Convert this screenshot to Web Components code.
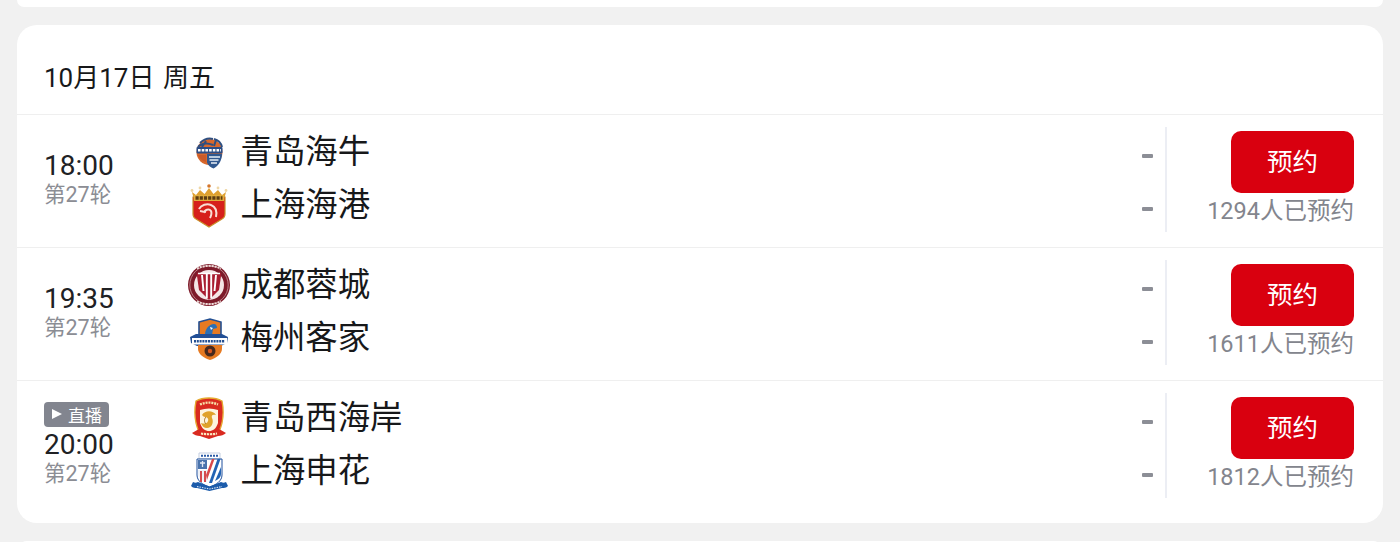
<!DOCTYPE html>
<html lang="zh">
<head>
<meta charset="utf-8">
<style>
  html, body { margin: 0; height: 542px; overflow: hidden; background: #f1f1f1; }
  body { font-family: Roboto, "Noto Sans CJK SC", sans-serif; color: #17181a; }
  schedule-page { display: flex; flex-direction: column; gap: 18px; padding: 0 17px; }
</style>
</head>
<body>
<schedule-page>
  <day-card class="edge-top"></day-card>
  <day-card date="10月17日 周五">
    <match-row time="18:00" round="第27轮" home="青岛海牛" away="上海海港" home-logo="hainiu" away-logo="haigang" count="1294"></match-row>
    <match-row time="19:35" round="第27轮" home="成都蓉城" away="梅州客家" home-logo="rongcheng" away-logo="kejia" count="1611"></match-row>
    <match-row time="20:00" round="第27轮" home="青岛西海岸" away="上海申花" home-logo="xihaian" away-logo="shenhua" count="1812" live></match-row>
  </day-card>
  <day-card class="edge-bottom"></day-card>
</schedule-page>

<script>
// club crests, drawn on a 40x44 box
const LOGOS = {
  hainiu: `
    <circle cx="20.500" cy="22" r="13" fill="#d8682c"/>
    <path d="M11 13c4-4 9-5 13-4M25 9c4 1 7 4 8 8M9 17c5-5 10-4 15-2M17 11l-4 6M27 10l-2 6" stroke="#2f4f80" stroke-width="2" fill="none"/>
    <rect x="7.500" y="17" width="26" height="6.500" rx="1" fill="#2a4d86"/>
    <path d="M9 20.300h23" stroke="#fff" stroke-width="2.400" stroke-dasharray="2.600 1.100"/>
    <path d="M18 24h15c0 7-4 12-8.500 14.500-3-1-5.500-3-6.500-6z" fill="#31588f"/>
    <path d="M20 27h11M20.500 30h9M22 33h6" stroke="#e9eef6" stroke-width="1.300"/>
    <path d="M9 25h8v7c-4-1-7-4-8-7z" fill="#c95a2a"/>`,
  haigang: `
    <path d="M3 9l4 3 4-5 4.500 4L20 5l4.500 6L29 7l4 5 4-3-2 8H5z" fill="#dfa030"/>
    <circle cx="3" cy="7.500" r="1.400" fill="#efd7a6"/><circle cx="11" cy="5" r="1.400" fill="#efd7a6"/>
    <circle cx="20" cy="3" r="1.800" fill="#d4762c"/><circle cx="29" cy="5" r="1.400" fill="#efd7a6"/><circle cx="37" cy="7.500" r="1.400" fill="#efd7a6"/>
    <path d="M4 14h32v17c0 2-1 4-3 5l-13 8-13-8c-2-1-3-3-3-5z" fill="#d6201b" stroke="#c98f2a" stroke-width="1.200"/>
    <rect x="5" y="12" width="30" height="6" fill="#e2ae3c"/>
    <path d="M6.500 15h27" stroke="#5d3c12" stroke-width="3.400" stroke-dasharray="3.200 1"/>
    <path d="M10 26c2-4 8-6 12-4 5 2 6 7 5 12M16 30c-1-3 4-5 6-2 1 2 0 5-1 7M11 28l5 1" stroke="#f9ddd5" stroke-width="2" fill="none"/>`,
  rongcheng: `
    <circle cx="20" cy="22" r="21" fill="#7e1b2a"/>
    <circle cx="20" cy="22" r="19.200" fill="none" stroke="#c99da0" stroke-width=".8"/>
    <circle cx="20" cy="22" r="15" fill="#f4e6e6"/>
    <path d="M8 10h24v3l-2 14-10 10-10-10-2-14z" fill="#a81d30"/>
    <path d="M13 12l1.500 16M17.800 11v24M22.200 11v24M27 12l-1.500 16" stroke="#fff" stroke-width="1.900"/>
    <path d="M9 10.500h22" stroke="#fff" stroke-width="1.500"/>
    <path d="M8 5.500c7-3.500 17-3.500 24 0" stroke="#eeddda" stroke-width="2" stroke-dasharray="2 1" fill="none"/>
    <path d="M8 38.500c7 3.500 17 3.500 24 0" stroke="#eeddda" stroke-width="2" stroke-dasharray="2 1" fill="none"/>`,
  kejia: `
    <path d="M10 6l11-3 11 3v18H10z" fill="#e67a22" stroke="#234f92" stroke-width="1.600"/>
    <path d="M16 19c0-6 4-11 9-11 2 0 3 2 3 4l-4 1-1 6z" fill="#2a6fb5"/>
    <path d="M21 11l3 1-2 2z" fill="#fff"/>
    <path d="M1 21l6-3 26 0 6 3-1 6-6 3H8l-6-3z" fill="#214f96"/>
    <rect x="3" y="22" width="35" height="6.500" fill="#fff"/>
    <path d="M5 25.300h31" stroke="#234f92" stroke-width="2.400" stroke-dasharray="2 .8"/>
    <path d="M9 29h24v4c0 5-6 9-12 11-6-2-12-6-12-11z" fill="#e67a22"/>
    <circle cx="21" cy="35" r="5.500" fill="#47291d"/>
    <circle cx="21" cy="35" r="2.200" fill="#d9561f"/>`,
  xihaian: `
    <path d="M7 5c7-4 19-4 26 0 2 10 1 22-3 31H10C6 27 5 15 7 5z" fill="#d92a20" stroke="#e6a92f" stroke-width="1.300"/>
    <path d="M11 14c6-2 12-2 18 0v13c-2 6-5 8-9 8s-7-2-9-8z" fill="#fdf4de"/>
    <path d="M13 19c3-5 11-5 14 0-3-1-5 0-4 3 2 4 0 10-5 10-3 0-5-2-6-5 3 1 6 1 7-2 1-2-1-4-3-4-1 0-2-1-3-2z" fill="#e0a22a"/>
    <path d="M17 21c-2 2-2 5 0 7" stroke="#a8701c" stroke-width="1" fill="none"/>
    <path d="M11 8.500c6-2.500 12-2.500 18 0" stroke="#f6dfa8" stroke-width="2.400" stroke-dasharray="2 .9" fill="none"/>
    <path d="M3 37l7-4c7 3 13 3 20 0l7 4c-2 2-5 3-8 3l-9 3-9-3c-3 0-6-1-8-3z" fill="#d92a20"/>
    <path d="M12 37.500c5 1 11 1 16 0" stroke="#fbe9c0" stroke-width="2.200" stroke-dasharray="2.200 .8" fill="none"/>`,
  shenhua: `
    <path d="M10 4h21v6H10z" fill="#fff" stroke="#c3cde0" stroke-width="1"/>
    <path d="M12 6.800h17" stroke="#2a5aa6" stroke-width="2" stroke-dasharray="2 1"/>
    <path d="M8 10h25v16c0 6-6 10-12.500 12C14 36 8 32 8 26z" fill="#fff" stroke="#1c4e9d" stroke-width="1"/>
    <rect x="9" y="11" width="9" height="9" fill="#4a74ad"/>
    <path d="M11 14h5M13.500 12v6" stroke="#e3e9f3" stroke-width="1.300"/>
    <path d="M9 21h9v12c-4-1-9-4-9-8z" fill="#eef1f7"/>
    <path d="M11 22h2v11h-2zM15 22h2v11h-2z" fill="#d44a4e"/>
    <path d="M20 34l8.500-24h3L23 34z" fill="#2263b4"/>
    <path d="M17 26l6-16h2.500l-7.500 21z" fill="#d8484a"/>
    <path d="M26 32l6-14v7c0 3-2 5-6 7z" fill="#2263b4"/>
    <path d="M4 33c2 1 3 1 5 0l11.500 4.500L32 33c2 1 3 1 5 0l2 4c-2 2-4 2-6 2l-12.500 3-12.500-3c-2 0-4 0-6-2z" fill="#1c5cab"/>
    <path d="M8 37.500l12.500 2.500 12.500-2.500" stroke="#d8e2f2" stroke-width="1.200" stroke-dasharray="1.500 1" fill="none"/>`
};

class TeamLine extends HTMLElement {
  constructor() {
    super();
    this.attachShadow({ mode: "open" });
  }

  connectedCallback() {
    const logo = LOGOS[this.getAttribute("logo")] || "";
    this.shadowRoot.innerHTML = `
      <style>
        :host { display: flex; align-items: center; height: 53px; }
        svg { width: 40px; height: 44px; display: block; margin-right: 11.500px; overflow: visible; filter: blur(.35px); flex: none; }
        .name { flex: 1; font-size: 32.400px; line-height: 44px; white-space: nowrap; }
        .score { width: 11px; height: 4px; background: #8c8e96; border-radius: 1px; margin: 8px 12px 0 0; }
      </style>
      <svg viewBox="0 0 40 44">${logo}</svg>
      <span class="name">${this.getAttribute("name")}</span>
      <span class="score"></span>
    `;
  }
}

class LiveTag extends HTMLElement {
  constructor() {
    super();
    this.attachShadow({ mode: "open" });
    this.shadowRoot.innerHTML = `
      <style>
        :host { display: inline-flex; align-items: center; gap: 6px; height: 25px; width: 65px; margin: -1px 0 1px; box-sizing: border-box; padding-left: 8px; background: #82858f; border-radius: 4px; color: #fff; font-size: 17px; }
        i { width: 0; height: 0; border-left: 10px solid #fff; border-top: 5.500px solid transparent; border-bottom: 5.500px solid transparent; }
      </style>
      <i></i><slot></slot>
    `;
  }
}

class MatchRow extends HTMLElement {
  constructor() {
    super();
    this.attachShadow({ mode: "open" });
  }

  connectedCallback() {
    const live = this.hasAttribute("live");
    this.shadowRoot.innerHTML = `
      <style>
        :host { display: grid; grid-template-columns: 172px 976px 1fr; align-items: center; height: 132px; border-top: 1px solid #efefef; }
        .when { padding-left: 27px; margin-top: -6px; display: flex; flex-direction: column; align-items: flex-start; }
        .time { font-size: 28px; line-height: 33px; color: #202124; }
        .round { font-size: 21.500px; line-height: 25px; color: #8b8d94; }
        .teams { display: flex; flex-direction: column; margin-top: -5px; }
        .action { align-self: start; height: 105px; margin-top: 12px; border-left: 2px solid #eceef4; display: flex; flex-direction: column; align-items: flex-end; padding-right: 29px; box-sizing: border-box; }
        button { width: 123px; height: 62px; margin-top: 4px; border: 0; border-radius: 10px; background: #d9000f; color: #fff; font: inherit; font-size: 25.500px; padding: 0 0 6px; }
        .count { font-size: 23.500px; line-height: 37px; color: #83858d; white-space: nowrap; }
      </style>
      <div class="when">
        ${live ? "<live-tag>直播</live-tag>" : ""}
        <span class="time">${this.getAttribute("time")}</span>
        <span class="round">${this.getAttribute("round")}</span>
      </div>
      <div class="teams">
        <team-line name="${this.getAttribute("home")}" logo="${this.getAttribute("home-logo")}"></team-line>
        <team-line name="${this.getAttribute("away")}" logo="${this.getAttribute("away-logo")}"></team-line>
      </div>
      <div class="action">
        <button>预约</button>
        <span class="count">${this.getAttribute("count")}人已预约</span>
      </div>
    `;
  }
}

class DayCard extends HTMLElement {
  constructor() {
    super();
    this.attachShadow({ mode: "open" });
  }

  connectedCallback() {
    const date = this.getAttribute("date");
    this.shadowRoot.innerHTML = `
      <style>
        :host { display: block; background: #fff; border-radius: 20px; }
        :host(.edge-top) { height: 7px; border-radius: 0 0 20px 20px; }
        :host(.edge-bottom) { height: 20px; }
        header { height: 89px; box-sizing: border-box; padding: 33.500px 0 0 27px; font-size: 26px; line-height: 38px; word-spacing: 2px; color: #17181a; }
        .rows { padding-bottom: 10px; }
      </style>
      ${date ? `<header>${date}</header><div class="rows"><slot></slot></div>` : ""}
    `;
  }
}

customElements.define("team-line", TeamLine);
customElements.define("live-tag", LiveTag);
customElements.define("match-row", MatchRow);
customElements.define("day-card", DayCard);
</script>
</body>
</html>
